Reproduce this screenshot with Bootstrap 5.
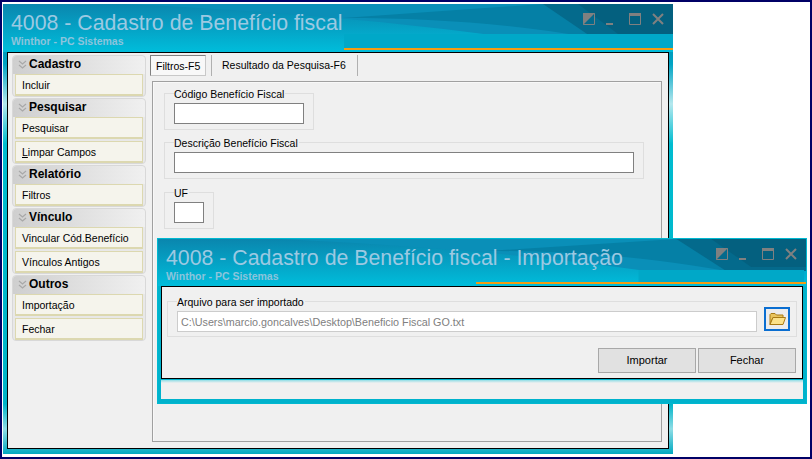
<!DOCTYPE html>
<html lang="pt-BR">
<head>
  <meta charset="UTF-8" />
  <meta name="viewport" content="width=device-width, initial-scale=1.0" />
  <title>4008 - Cadastro de Benefício fiscal</title>
  <link href="https://cdn.jsdelivr.net/npm/bootstrap@5.3.3/dist/css/bootstrap.min.css" rel="stylesheet" />
  <style>
    body { margin: 0; background: #fff; font-family: "Liberation Sans", Arial, sans-serif; font-size: 10.5px; color: #000; }
    .desk { width: 812px; height: 459px; border: 2px solid #000066; position: relative; background: #fff; overflow: hidden; }

    .win { position: absolute; display: flex; flex-direction: column; }
    .win-main { left: 1px; top: 2px; width: 670px; height: 450px; padding: 0 4px 5px 4px;
      background: linear-gradient(180deg, #04789f 0, #00a4c4 60px, #b5e8ee 100px, #00bcd0 140px, #00b4c8 400px, #8fdde6 425px, #00a9c0 450px); }
    .win-import { left: 155px; top: 236px; width: 650px; height: 166px; padding: 0 3px 4px 3px; background: #00b2cc; border: 1px solid #00b8d0; }

    .title-bar { position: relative; padding: 0 0 0 8px; flex: none; color: #9cc9e2; }
    .win-main .title-bar { height: 48px; margin: 0 -4px; }
    .win-import .title-bar { height: 47px; margin: 0 -3px; }
    .title-bg { position: absolute; left: 0; top: 0; width: 100%; height: 100%; }
    .title-text { position: relative; font-size: 21.3px; line-height: 24px; padding-top: 7px; }
    .title-sub { position: relative; font-weight: 700; font-size: 10.5px; line-height: 13px; color: #8cc4dc; }
    .win-ctrls { position: absolute; top: 9px; right: 9px; }

    .win-body { flex: 1; min-height: 0; background: #f0f0f0; border: 1px solid #000; }
    .side { width: 138px; flex: none; padding: 2px 0 0 4px; }
    .side-group { background: #e8e8e8; border: 1px solid #d8d8d8; border-radius: 4px; margin-bottom: 1px; }
    .side-head { height: 18px; padding: 0 0 2px 5px; gap: 2px; font-weight: 700; font-size: 12px; border-radius: 4px 4px 0 0;
      background: linear-gradient(90deg, #cfcfcf, #f0f0f0); }
    .side-btn { display: block; width: 128px; height: 22px; margin: 0 0 2px 2px; padding: 0 0 0 6px; text-align: left; font-size: 10.5px; line-height: 20px; color: #000;
      background: #f5f4ec; border: 1px solid #dcd8b0; border-bottom-width: 2px; border-radius: 0; }
    .side-btn:last-child { margin-bottom: 0; }
    .side-btn:hover { background: #f5f4ec; color: #000; border-color: #dcd8b0; }

    .tabs-area { flex: 1; min-width: 0; padding: 2px 6px 6px 4px; display: flex; flex-direction: column; }
    .tab-row { height: 21px; flex: none; }
    .tab-item { height: 21px; line-height: 20px; font-size: 10.5px; color: #000; padding: 0 5px; background: #f0f0f0; white-space: nowrap; }
    .tab-on { width: 56px; border: 1px solid #c8c8c8; border-top-color: #808080; border-left-color: #808080; background: #f8f8f8; }
    .tab-off { margin-left: 5px; padding-left: 10px; width: 147px; border-left: 1px solid #b0b0b0; border-right: 1px solid #b0b0b0; }
    .tab-panel { flex: 1; margin: 5px 0 0 2px; border: 1px solid #a0a0a0; padding: 4px 0 0 11px; box-shadow: inset 1px 1px 0 #f8f8f8; }

    .fset { border: 1px solid #dedede; margin: 0 0 5px 0; padding: 2px 9px 5px 9px; }
    .fset legend { float: none; width: auto; margin: 0; padding: 2px 1px 0 0; font-size: 10.5px; line-height: 13px; color: #000; }
    .fset-cod { width: 150px; }
    .fset-desc { width: 480px; margin-bottom: 6px; }
    .fset-uf { width: 50px; }
    .fld { display: block; height: 21px; padding: 0 3px; border: 1px solid #808080; border-radius: 0; font-size: 10.5px; background: #fff; }
    .fld:focus { box-shadow: none; border-color: #808080; }

    .fset-arq { width: 630px; margin: 7px 0 0 5px; padding: 2px 6px 4px 9px; }
    .fld-arq { width: 580px; flex: none; border-color: #ccc; color: #808080; font-size: 10.75px; }
    .folder-btn { width: 26px; height: 24px; flex: none; padding: 0; margin-left: 7px; margin-top: -4px; border: 2px solid #0a6ed1; border-radius: 0; background: #ececec; }
    .folder-btn:hover { background: #ececec; border-color: #0a6ed1; }
    .act-row { padding: 11px 6px 0 0; gap: 2px; }
    .act-btn { width: 98px; height: 25px; padding: 0; font-size: 11px; color: #000; background: #e1e1e1; border: 1px solid #a8a8a8; border-radius: 0; }
    .act-btn:hover { background: #e1e1e1; color: #000; border-color: #a8a8a8; }
    .status-strip { height: 19px; flex: none; margin: 1px 0 0 0; background: linear-gradient(180deg, #90dde6 0, #f0f0f0 3px, #f0f0f0 100%); }
    .ul-key { text-decoration: underline; }
  </style>
</head>
<body>
  <div class="desk">

    <!-- janela principal -->
    <div class="win win-main">
      <div class="title-bar">
        <svg class="title-bg" viewBox="0 0 670 48" preserveAspectRatio="none">
          <defs>
            <linearGradient id="tg1" x1="0" y1="0" x2="0" y2="1">
              <stop offset="0" stop-color="#0a86ae" /><stop offset="1" stop-color="#00bddb" />
            </linearGradient>
          </defs>
          <rect width="670" height="48" fill="url(#tg1)" />
          <path d="M120 0 C250 6 380 16 510 34 L670 34 L670 0 Z" fill="#0a8fb8" />
          <path d="M340 14 C430 14 510 20 590 34 L670 34 L670 0 L540 0 Z" fill="#0580a6" />
          <path d="M540 0 L590 34 L670 34 L670 0 Z" fill="#046a8c" />
          <path d="M575 0 L615 30 L670 30 L670 0 Z" fill="#04607f" />
          <rect x="341" y="30" width="329" height="14" fill="#00a8c8" />
          <rect x="341" y="44" width="329" height="2" fill="#f59c12" />
        </svg>
        <div class="title-text">4008 - Cadastro de Benefício fiscal</div>
        <div class="title-sub">Winthor - PC Sistemas</div>
        <svg class="win-ctrls" width="81" height="12" viewBox="0 0 81 12">
          <path d="M0.5 0.5H11.5V11.5H0.5Z" fill="none" stroke="#808080" />
          <path d="M0 0H12L0 12Z" fill="#808080" />
          <rect x="23" y="10" width="7" height="2" fill="#808080" />
          <path d="M46.5 1.5H57.5V11.5H46.5Z" fill="none" stroke="#808080" />
          <rect x="46" y="0" width="12" height="3" fill="#808080" />
          <path d="M70 1L80 11M80 1L70 11" stroke="#808080" stroke-width="2" fill="none" />
        </svg>
      </div>
      <div class="win-body d-flex">
        <div class="side">
          <div class="side-group">
            <div class="side-head d-flex align-items-center">
              <svg width="9" height="9" viewBox="0 0 9 9"><path d="M1 1L4.5 4L8 1M1 5L4.5 8L8 5" fill="none" stroke="#a8a8a8" stroke-width="1.2" /></svg>
              <span>Cadastro</span>
            </div>
            <button type="button" class="btn side-btn">Incluir</button>
          </div>
          <div class="side-group">
            <div class="side-head d-flex align-items-center">
              <svg width="9" height="9" viewBox="0 0 9 9"><path d="M1 1L4.5 4L8 1M1 5L4.5 8L8 5" fill="none" stroke="#a8a8a8" stroke-width="1.2" /></svg>
              <span>Pesquisar</span>
            </div>
            <button type="button" class="btn side-btn">Pesquisar</button>
            <button type="button" class="btn side-btn"><span class="ul-key">L</span>impar Campos</button>
          </div>
          <div class="side-group">
            <div class="side-head d-flex align-items-center">
              <svg width="9" height="9" viewBox="0 0 9 9"><path d="M1 1L4.5 4L8 1M1 5L4.5 8L8 5" fill="none" stroke="#a8a8a8" stroke-width="1.2" /></svg>
              <span>Relatório</span>
            </div>
            <button type="button" class="btn side-btn">Filtros</button>
          </div>
          <div class="side-group">
            <div class="side-head d-flex align-items-center">
              <svg width="9" height="9" viewBox="0 0 9 9"><path d="M1 1L4.5 4L8 1M1 5L4.5 8L8 5" fill="none" stroke="#a8a8a8" stroke-width="1.2" /></svg>
              <span>Vínculo</span>
            </div>
            <button type="button" class="btn side-btn">Vincular Cód.Benefício</button>
            <button type="button" class="btn side-btn">Vínculos Antigos</button>
          </div>
          <div class="side-group">
            <div class="side-head d-flex align-items-center">
              <svg width="9" height="9" viewBox="0 0 9 9"><path d="M1 1L4.5 4L8 1M1 5L4.5 8L8 5" fill="none" stroke="#a8a8a8" stroke-width="1.2" /></svg>
              <span>Outros</span>
            </div>
            <button type="button" class="btn side-btn">Importação</button>
            <button type="button" class="btn side-btn">Fechar</button>
          </div>
        </div>
        <div class="tabs-area">
          <div class="tab-row d-flex">
            <div class="tab-item tab-on">Filtros-F5</div>
            <div class="tab-item tab-off">Resultado da Pesquisa-F6</div>
          </div>
          <div class="tab-panel">
            <fieldset class="fset fset-cod">
              <legend>Código Benefício Fiscal</legend>
              <input type="text" class="form-control fld" />
            </fieldset>
            <fieldset class="fset fset-desc">
              <legend>Descrição Benefício Fiscal</legend>
              <input type="text" class="form-control fld" />
            </fieldset>
            <fieldset class="fset fset-uf">
              <legend>UF</legend>
              <input type="text" class="form-control fld" />
            </fieldset>
          </div>
        </div>
      </div>
    </div>

    <!-- janela de importacao -->
    <div class="win win-import">
      <div class="title-bar">
        <svg class="title-bg" viewBox="0 0 650 47" preserveAspectRatio="none">
          <rect width="650" height="47" fill="url(#tg1)" />
          <path d="M120 0 C250 6 380 16 490 32 L650 32 L650 0 Z" fill="#0a8fb8" />
          <path d="M330 12 C420 12 490 18 570 32 L650 32 L650 0 L520 0 Z" fill="#0580a6" />
          <path d="M520 0 L570 32 L650 32 L650 0 Z" fill="#046a8c" />
          <path d="M555 0 L595 28 L650 28 L650 0 Z" fill="#04607f" />
          <rect x="482" y="31" width="166" height="12" fill="#00a8c8" />
          <rect x="319" y="43" width="331" height="2" fill="#f59c12" />
        </svg>
        <div class="title-text">4008 - Cadastro de Benefício fiscal - Importação</div>
        <div class="title-sub">Winthor - PC Sistemas</div>
        <svg class="win-ctrls" width="81" height="12" viewBox="0 0 81 12">
          <path d="M0.5 0.5H11.5V11.5H0.5Z" fill="none" stroke="#808080" />
          <path d="M0 0H12L0 12Z" fill="#808080" />
          <rect x="23" y="10" width="7" height="2" fill="#808080" />
          <path d="M46.5 1.5H57.5V11.5H46.5Z" fill="none" stroke="#808080" />
          <rect x="46" y="0" width="12" height="3" fill="#808080" />
          <path d="M70 1L80 11M80 1L70 11" stroke="#808080" stroke-width="2" fill="none" />
        </svg>
      </div>
      <div class="win-body">
        <fieldset class="fset fset-arq">
          <legend>Arquivo para ser importado</legend>
          <div class="d-flex align-items-start">
            <input type="text" class="form-control fld fld-arq" value="C:\Users\marcio.goncalves\Desktop\Beneficio Fiscal GO.txt" />
            <button type="button" class="btn folder-btn d-flex align-items-center justify-content-center">
              <svg width="17" height="14" viewBox="0 0 17 14">
                <path d="M1 12.5V2.5L2 1.5H6L7.5 3H14V5.5H4L1 12.5Z" fill="#e9c45c" stroke="#a87a14" />
                <path d="M1 12.5L4 5.5H16.5L14 12.5Z" fill="#fbe28a" stroke="#a87a14" />
              </svg>
            </button>
          </div>
        </fieldset>
        <div class="act-row d-flex justify-content-end">
          <button type="button" class="btn act-btn">Importar</button>
          <button type="button" class="btn act-btn">Fechar</button>
        </div>
      </div>
      <div class="status-strip"></div>
    </div>

  </div>
  <script src="https://cdn.jsdelivr.net/npm/bootstrap@5.3.3/dist/js/bootstrap.bundle.min.js"></script>
</body>
</html>
